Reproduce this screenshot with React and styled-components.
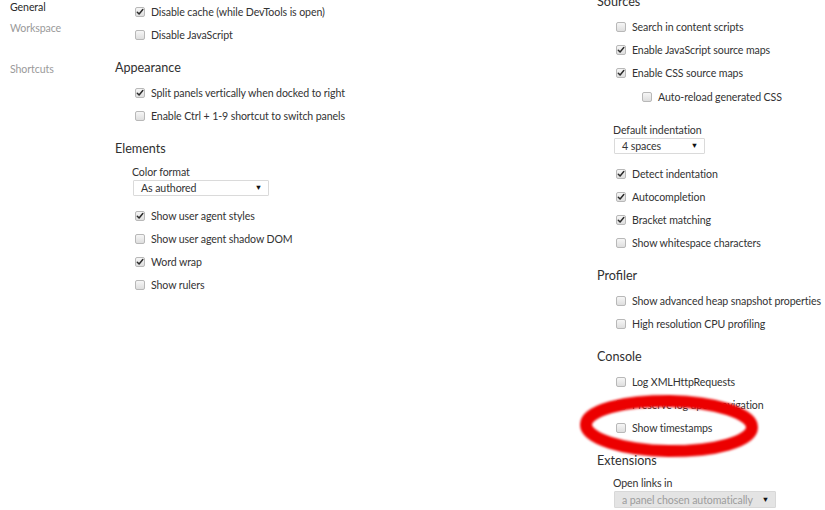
import React from 'react';
import styled, { createGlobalStyle } from 'styled-components';

const Global = createGlobalStyle`
  html, body { margin: 0; padding: 0; background: #fff; }
  body { font-family: Lato, "Open Sans", "Noto Sans", sans-serif; }
`;

const Page = styled.div`
  position: relative;
  width: 825px;
  height: 510px;
  overflow: hidden;
  display: flex;
  background: #fff;
  color: #333;
  font-size: 10.6px;
  letter-spacing: -0.1px;
`;

const Sidebar = styled.nav`
  width: 115px;
  flex: none;
  box-sizing: border-box;
  padding-left: 10px;
  margin-top: -3px;
  display: flex;
  flex-direction: column;
`;

const NavItem = styled.div`
  line-height: 21px;
  font-size: 10.6px;
  color: ${p => (p.$active ? '#2a2a2a' : '#9a9a9a')};
  margin-top: ${p => (p.$gap ? '20px' : '0')};
`;

const Column = styled.div`
  width: ${p => p.$w}px;
  flex: none;
  margin-top: ${p => p.$offset}px;
  display: flex;
  flex-direction: column;
`;

const Section = styled.section`
  margin-bottom: 12px;
`;

const SectionTitle = styled.div`
  font-size: 12.6px;
  line-height: 20px;
  margin-bottom: 3px;
  color: #303030;
  letter-spacing: 0;
`;

const Rows = styled.div`
  padding-left: ${p => p.$indent}px;
  display: flex;
  flex-direction: column;
`;

const Row = styled.label`
  height: 23px;
  display: flex;
  align-items: center;
  gap: 6px;
  padding-left: ${p => p.$sub || 0}px;
  margin-top: ${p => (p.$sub ? '1px' : '0')};
  white-space: nowrap;
  color: #333;
`;

const Box = styled.span`
  width: 10px;
  height: 10px;
  flex: none;
  box-sizing: border-box;
  border: 1px solid #b8b8b8;
  border-radius: 2px;
  background: linear-gradient(#f6f6f6, #dedede);
  display: flex;
  align-items: center;
  justify-content: center;
`;

const Field = styled.div`
  margin-top: ${p => p.$mt}px;
  margin-bottom: 8px;
  padding-left: ${p => p.$indent}px;
  display: flex;
  flex-direction: column;
  align-items: flex-start;
`;

const FieldLabel = styled.div`
  line-height: 16px;
  color: #333;
`;

const Select = styled.div`
  width: ${p => p.$w}px;
  height: ${p => p.$h || 16}px;
  margin-left: 1px;
  box-sizing: border-box;
  border: 1px solid ${p => (p.$disabled ? '#d8d8d8' : '#dadada')};
  border-radius: 1px;
  background: ${p => (p.$disabled ? '#e4e4e4' : '#fff')};
  color: ${p => (p.$disabled ? '#9c9c9c' : '#333')};
  display: flex;
  align-items: center;
  justify-content: space-between;
  padding: 0 6px 0 7px;
  white-space: nowrap;
`;

const Arrow = styled.span`
  font-size: 7.5px;
  color: #111;
  line-height: 1;
`;

const Annotation = styled.svg`
  position: absolute;
  left: 0;
  top: 0;
  pointer-events: none;
`;

function Check({ on }) {
  return (
    <Box>
      {on && (
        <svg width="8" height="8" viewBox="0 0 8 8">
          <path d="M1.3 4.2 L3.1 6 L6.8 1.6" fill="none" stroke="#2b2b2b" strokeWidth="1.5" strokeLinecap="round" strokeLinejoin="round" />
        </svg>
      )}
    </Box>
  );
}

function Opt({ on, children, sub }) {
  return (
    <Row $sub={sub}>
      <Check on={on} />
      <span>{children}</span>
    </Row>
  );
}

export default function App() {
  return (
    <>
      <Global />
      <Page>
        <Sidebar>
          <NavItem $active>General</NavItem>
          <NavItem>Workspace</NavItem>
          <NavItem $gap>Shortcuts</NavItem>
        </Sidebar>

        <Column $w={482} $offset={0}>
          <Section>
            <Rows $indent={20}>
              <Opt on>Disable cache (while DevTools is open)</Opt>
              <Opt>Disable JavaScript</Opt>
            </Rows>
          </Section>
          <Section>
            <SectionTitle>Appearance</SectionTitle>
            <Rows $indent={20}>
              <Opt on>Split panels vertically when docked to right</Opt>
              <Opt>Enable Ctrl + 1-9 shortcut to switch panels</Opt>
            </Rows>
          </Section>
          <Section>
            <SectionTitle>Elements</SectionTitle>
            <Field $mt={5} $indent={17}>
              <FieldLabel>Color format</FieldLabel>
              <Select $w={136}>
                <span>As authored</span>
                <Arrow>▼</Arrow>
              </Select>
            </Field>
            <Rows $indent={20}>
              <Opt on>Show user agent styles</Opt>
              <Opt>Show user agent shadow DOM</Opt>
              <Opt on>Word wrap</Opt>
              <Opt>Show rulers</Opt>
            </Rows>
          </Section>
        </Column>

        <Column $w={228} $offset={-8}>
          <Section>
            <SectionTitle>Sources</SectionTitle>
            <Rows $indent={19}>
              <Opt>Search in content scripts</Opt>
              <Opt on>Enable JavaScript source maps</Opt>
              <Opt on>Enable CSS source maps</Opt>
              <Opt sub={26}>Auto-reload generated CSS</Opt>
            </Rows>
            <Field $mt={14} $indent={16}>
              <FieldLabel>Default indentation</FieldLabel>
              <Select $w={91}>
                <span>4 spaces</span>
                <Arrow>▼</Arrow>
              </Select>
            </Field>
            <Rows $indent={19}>
              <Opt on>Detect indentation</Opt>
              <Opt on>Autocompletion</Opt>
              <Opt on>Bracket matching</Opt>
              <Opt>Show whitespace characters</Opt>
            </Rows>
          </Section>
          <Section>
            <SectionTitle>Profiler</SectionTitle>
            <Rows $indent={19}>
              <Opt>Show advanced heap snapshot properties</Opt>
              <Opt>High resolution CPU profiling</Opt>
            </Rows>
          </Section>
          <Section>
            <SectionTitle>Console</SectionTitle>
            <Rows $indent={19}>
              <Opt>Log XMLHttpRequests</Opt>
              <Opt>Preserve log upon navigation</Opt>
              <Opt>Show timestamps</Opt>
            </Rows>
          </Section>
          <Section>
            <SectionTitle>Extensions</SectionTitle>
            <Field $mt={4} $indent={16}>
              <FieldLabel>Open links in</FieldLabel>
              <Select $w={162} $h={17} $disabled>
                <span>a panel chosen automatically</span>
                <Arrow>▼</Arrow>
              </Select>
            </Field>
          </Section>
        </Column>

        <Annotation width="825" height="510" viewBox="0 0 825 510">
          <defs>
            <filter id="soft" x="-10%" y="-30%" width="120%" height="160%">
              <feGaussianBlur stdDeviation="0.8" />
            </filter>
          </defs>
          <ellipse
            cx="669"
            cy="426"
            rx="83"
            ry="25"
            fill="none"
            stroke="#ec0000"
            strokeWidth="12"
            transform="rotate(1 669 426)"
            filter="url(#soft)"
          />
        </Annotation>
      </Page>
    </>
  );
}
